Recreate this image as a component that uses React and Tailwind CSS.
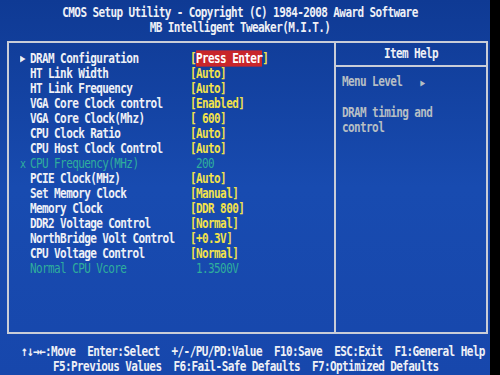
const rows = [
  { mark: '▶', label: 'DRAM Configuration', value: 'Press Enter', hot: true },
  { label: 'HT Link Width', value: '[Auto]' },
  { label: 'HT Link Frequency', value: '[Auto]' },
  { label: 'VGA Core Clock control', value: '[Enabled]' },
  { label: 'VGA Core Clock(Mhz)', value: '[ 600]' },
  { label: 'CPU Clock Ratio', value: '[Auto]' },
  { label: 'CPU Host Clock Control', value: '[Auto]' },
  { mark: 'x', label: 'CPU Frequency(MHz)', value: ' 200', dim: true },
  { label: 'PCIE Clock(MHz)', value: '[Auto]' },
  { label: 'Set Memory Clock', value: '[Manual]' },
  { label: 'Memory Clock', value: '[DDR 800]' },
  { label: 'DDR2 Voltage Control', value: '[Normal]' },
  { label: 'NorthBridge Volt Control', value: '[+0.3V]' },
  { label: 'CPU Voltage Control', value: '[Normal]' },
  { label: 'Normal CPU Vcore', value: ' 1.3500V', dim: true },
];

const Row = ({ row }) => (
  <div className="flex h-[15px] items-center leading-[15px] whitespace-pre scale-y-[1.25]">
    <span
      className={`w-[10px] ${row.dim ? 'text-[#2fae9c] text-[10px] font-normal' : 'text-[#eef0f6] text-[9px]'}`}
    >
      {row.mark || ''}
    </span>
    <span className={`w-[160px] ${row.dim ? 'text-[#2fae9c] font-normal' : 'text-[#eef0f6]'}`}>
      {row.label}
    </span>
    {row.hot ? (
      <span className="text-[#f2e24a]">
        [<span className="bg-[#c8262b] text-white">{row.value}</span>]
      </span>
    ) : (
      <span className={row.dim ? 'text-[#2fae9c] font-normal' : 'text-[#f2e24a]'}>{row.value}</span>
    )}
  </div>
);

export default function App() {
  return (
    <div className="w-[500px] h-[375px] bg-black overflow-hidden">
      <div className="w-[490px] h-full flex flex-col pt-[5px] bg-gradient-to-b from-[#0f3a94] via-[#184bb0] to-[#1747ac] font-['DejaVu_Sans_Mono',monospace] text-[11px] font-bold tracking-[-0.6px] text-[#eef0f6]">
        <div className="w-[480px] text-center leading-[15px] whitespace-pre">
          <div className="scale-y-[1.25]">CMOS Setup Utility - Copyright (C) 1984-2008 Award Software</div>
          <div className="scale-y-[1.25]">MB Intelligent Tweaker(M.I.T.)</div>
        </div>

        <div className="mt-[6px] ml-[7px] w-[481px] h-[293px] flex border-2 border-[#c9cdd8]">
          <div className="w-[327px] border-r-2 border-[#c9cdd8] pt-[8px] pl-[11px]">
            {rows.map((row) => (
              <Row key={row.label} row={row} />
            ))}
          </div>
          <div className="flex-1 flex flex-col">
            <div className="h-[24px] border-b-2 border-[#c9cdd8] pt-[3px] text-center leading-[15px]">
              <div className="scale-y-[1.25]">Item Help</div>
            </div>
            <div className="pt-[7px] pl-[6px] leading-[15px] text-[#b6bec4] whitespace-pre">
              <div className="scale-y-[1.25]">
                Menu Level   <span className="text-[8px]">▶</span>
              </div>
              <div className="h-[15px]" />
              <div className="scale-y-[1.25]">DRAM timing and</div>
              <div className="scale-y-[1.25]">control</div>
            </div>
          </div>
        </div>

        <div className="mt-[10px] leading-[15px] whitespace-pre">
          <div className="pl-[21px] scale-y-[1.25]">↑↓→←:Move  Enter:Select  +/-/PU/PD:Value  F10:Save  ESC:Exit  F1:General Help</div>
          <div className="pl-[53px] scale-y-[1.25]">F5:Previous Values  F6:Fail-Safe Defaults  F7:Optimized Defaults</div>
        </div>
      </div>
    </div>
  );
}
